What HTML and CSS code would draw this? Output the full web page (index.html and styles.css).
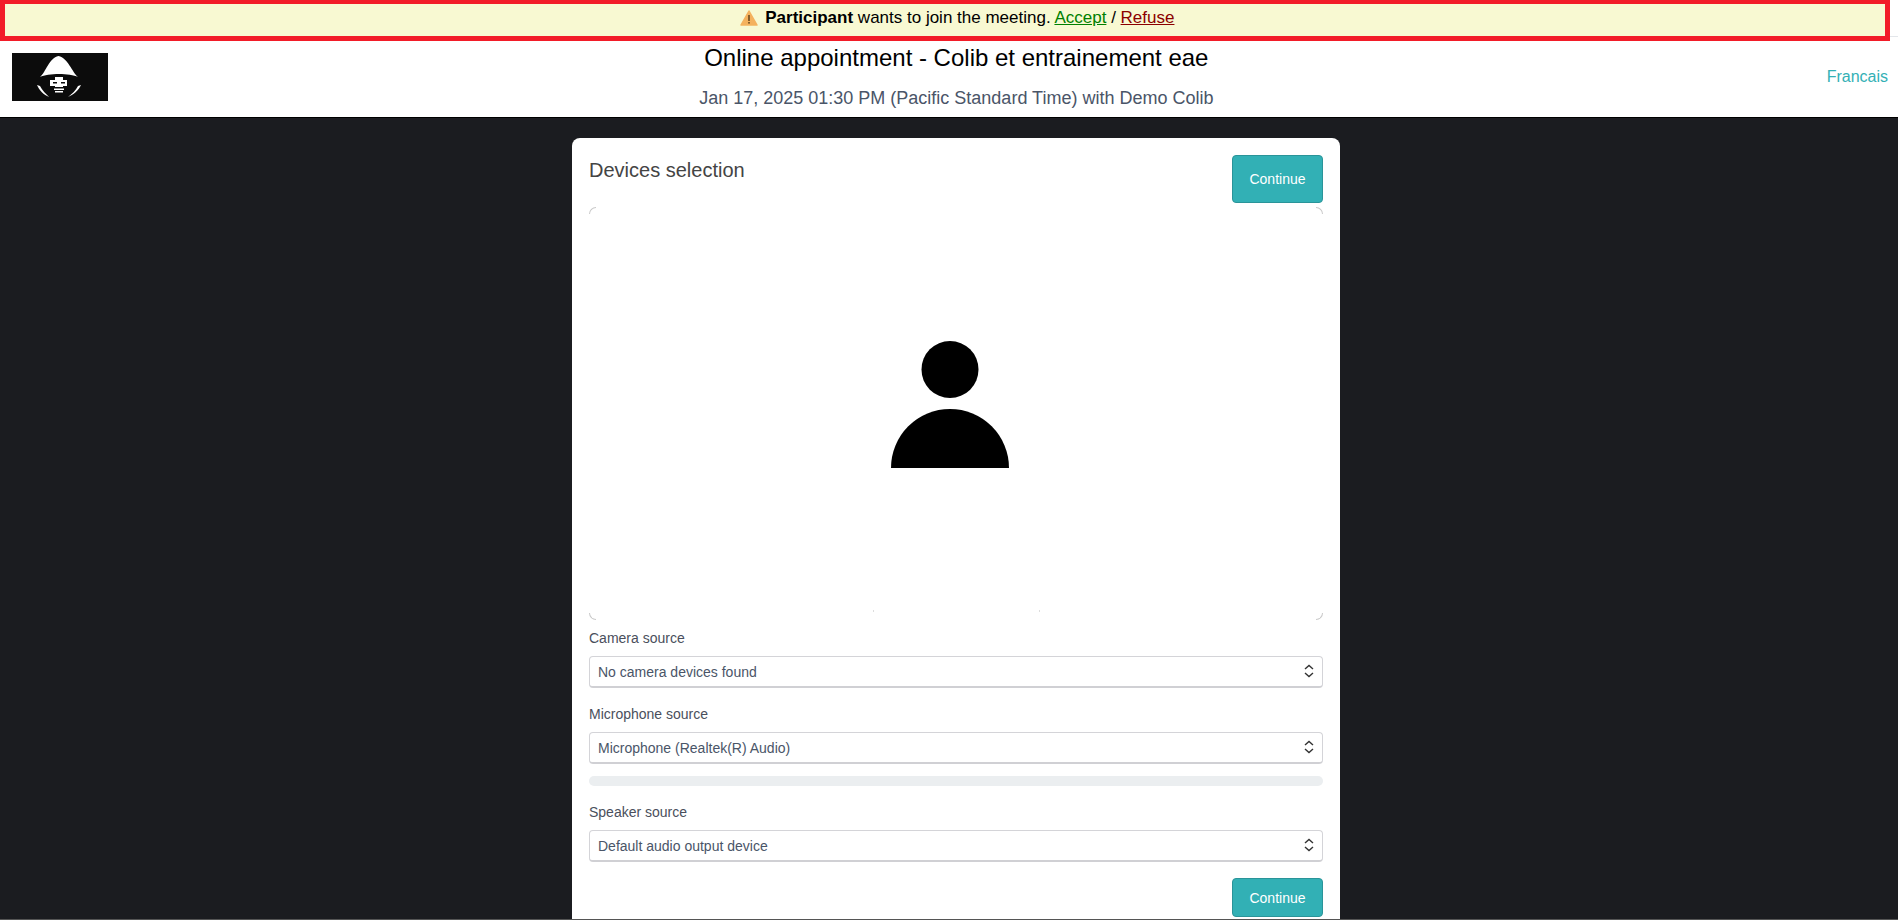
FILE: index.html
```html
<!DOCTYPE html>
<html lang="en">
<head>
    <meta charset="UTF-8">
    <meta name="viewport" content="width=device-width, initial-scale=1.0">
    <title>Online appointment</title>
    <link rel="stylesheet" href="styles.css">
</head>
<body>
    <div class="join-banner">
        <svg class="warn-icon" width="18" height="16" viewBox="0 0 18 16">
            <path d="M9 1 L17 15 L1 15 Z" fill="#f4b25e" stroke="#f4b25e" stroke-width="1.500" stroke-linejoin="round"/>
            <rect x="8.200" y="5" width="1.600" height="6" fill="#6b4a20"/>
            <rect x="8.200" y="12" width="1.600" height="1.600" fill="#6b4a20"/>
        </svg>
        <b>Participant</b> wants to join the meeting.
        <a class="accept" href="#">Accept</a> / <a class="refuse" href="#">Refuse</a>
    </div>

    <header class="top-header">
        <div class="logo">
            <svg width="96" height="48" viewBox="0 0 96 48">
                <rect width="96" height="48" fill="#0c0c0c"/>
                <path d="M28 24 C34 19 37 5 46.500 3 C56 5 60 19 66 24 C58 20 36 20 28 24 Z" fill="#fff"/>
                <path d="M43 24 H51 V27 H55 V33 H51 V34 H43 V33 H38 V27 H43 Z" fill="#fff"/>
                <rect x="41" y="29" width="4" height="1.500" fill="#0c0c0c"/>
                <rect x="49" y="29" width="4" height="1.500" fill="#0c0c0c"/>
                <rect x="42" y="35.500" width="10" height="1.500" fill="#fff"/>
                <rect x="43" y="38" width="8" height="1.500" fill="#fff"/>
                <path d="M25 32 L28 33 C30 37 34 41 37 44 C32 42 27 37 25 32 Z" fill="#fff"/>
                <path d="M69 32 L66 33 C64 37 60 41 56 44 C61 42 67 37 69 32 Z" fill="#fff"/>
            </svg>
        </div>
        <div class="header-text">
            <h1>Online appointment - Colib et entrainement eae</h1>
            <p>Jan 17, 2025 01:30 PM (Pacific Standard Time) with Demo Colib</p>
        </div>
        <a class="lang" href="#">Francais</a>
    </header>

    <main class="page">
        <div class="card">
            <div class="card-top">
                <h2>Devices selection</h2>
                <button class="btn">Continue</button>
            </div>

            <div class="video-box">
                <span class="corner tl"></span>
                <span class="corner tr"></span>
                <span class="corner bl"></span>
                <span class="corner br"></span>
                <span class="tick tick-left"></span>
                <span class="tick tick-right"></span>
                <svg width="118" height="127" viewBox="0 0 118 127">
                    <circle cx="59" cy="28.500" r="28.500"/>
                    <path d="M0 127 A59 59 0 0 1 118 127 Z"/>
                </svg>
            </div>

            <label class="field-label">Camera source</label>
            <div class="select-box">No camera devices found
                <svg class="chevrons" width="10" height="14" viewBox="0 0 10 14"><path d="M1 5 L5 1.500 L9 5 M1 9 L5 12.500 L9 9"/></svg>
            </div>

            <label class="field-label">Microphone source</label>
            <div class="select-box">Microphone (Realtek(R) Audio)
                <svg class="chevrons" width="10" height="14" viewBox="0 0 10 14"><path d="M1 5 L5 1.500 L9 5 M1 9 L5 12.500 L9 9"/></svg>
            </div>
            <div class="level-bar"></div>

            <label class="field-label">Speaker source</label>
            <div class="select-box">Default audio output device
                <svg class="chevrons" width="10" height="14" viewBox="0 0 10 14"><path d="M1 5 L5 1.500 L9 5 M1 9 L5 12.500 L9 9"/></svg>
            </div>

            <div class="card-bottom">
                <button class="btn">Continue</button>
            </div>
        </div>
    </main>
</body>
</html>
```

FILE: styles.css
```css
* {
    margin: 0;
    padding: 0;
    box-sizing: border-box;
}

html, body {
    height: 920px;
    overflow: hidden;
}

body {
    position: relative;
    background: #1b1c20;
    font-family: "Liberation Sans", Arial, sans-serif;
    color: #4a5568;
    border-bottom: 1px solid #555;
}

/* Banner sits over the top of the header */
.join-banner {
    position: absolute;
    top: 0;
    left: 0;
    width: 1890px;
    height: 41px;
    padding-left: 24px;
    background: #f8f9d2;
    border: 5px solid #f21c28;
    border-top-width: 4px;
    color: #000;
    font-size: 17px;
    line-height: 27px;
    text-align: center;
}

.warn-icon {
    vertical-align: -3px;
    margin-right: 3px;
}

.accept {
    color: #008000;
}

.refuse {
    color: #8b0000;
}

.top-header {
    display: flex;
    justify-content: space-between;
    align-items: center;
    height: 118px;
    padding: 41px 10px 0 12px;
    background: linear-gradient(#fff 36px, #e3e6ea 36px, #e3e6ea 37px, #fff 37px);
    border-bottom: 1px solid #000;
}

.logo {
    width: 96px;
    height: 48px;
    margin-top: -4px;
}

.logo svg {
    display: block;
}

.header-text {
    flex: 1;
    padding-right: 22px;
    text-align: center;
}

.header-text h1 {
    font-size: 24px;
    font-weight: normal;
    color: #000;
    line-height: 28px;
    margin-top: -5px;
}

.header-text p {
    font-size: 18px;
    line-height: 22px;
    margin-top: 15px;
}

.lang {
    color: #33b0b5;
    font-size: 16px;
    text-decoration: none;
    margin-top: -5px;
}

.page {
    display: flex;
    justify-content: center;
    padding: 20px 0 0 14px;
}

.card {
    width: 768px;
    height: 800px;
    padding: 17px 17px 0;
    background: #fff;
    border-radius: 8px;
}

.card-top {
    display: flex;
    justify-content: space-between;
    align-items: flex-start;
}

.card-top h2 {
    font-size: 20px;
    font-weight: normal;
    line-height: 24px;
    color: #444;
    margin-top: 3px;
}

.btn {
    width: 91px;
    height: 48px;
    background: #32b0b5;
    border: 1px solid #2a9499;
    border-radius: 4px;
    color: #fff;
    font-family: inherit;
    font-size: 14px;
}

.video-box {
    position: relative;
    display: flex;
    justify-content: center;
    align-items: center;
    height: 413px;
    margin-top: 4px;
    padding: 0 12px 18px 0;
}

/* Faint rounded corners left around the white video frame */
.corner {
    position: absolute;
    width: 7px;
    height: 7px;
    border: 0 solid #c9c9c9;
}

.tl {
    top: 0;
    left: 0;
    border-width: 1px 0 0 1px;
    border-top-left-radius: 7px;
}

.tr {
    top: 0;
    right: 0;
    border-width: 1px 1px 0 0;
    border-top-right-radius: 7px;
}

.bl {
    bottom: 0;
    left: 0;
    border-width: 0 0 1px 1px;
    border-bottom-left-radius: 7px;
}

.br {
    bottom: 0;
    right: 0;
    border-width: 0 1px 1px 0;
    border-bottom-right-radius: 7px;
}

.tick {
    position: absolute;
    bottom: 8px;
    width: 1px;
    height: 2px;
    background: #ddd;
}

.tick-left {
    left: 284px;
}

.tick-right {
    left: 450px;
}

.field-label {
    display: block;
    font-size: 14px;
    line-height: 16px;
    color: #4a4f5c;
    margin-top: 10px;
}

.select-box {
    position: relative;
    height: 32px;
    margin-top: 10px;
    padding-left: 8px;
    border: 1px solid #d4d4d8;
    border-bottom: 2px solid #d0d0d4;
    border-radius: 4px;
    font-size: 14px;
    line-height: 31px;
}

.select-box + .field-label {
    margin-top: 18px;
}

.chevrons {
    position: absolute;
    right: 8px;
    top: 7px;
    fill: none;
    stroke: #333;
    stroke-width: 1.400;
}

.level-bar {
    height: 10px;
    margin-top: 12px;
    background: #ebeef0;
    border-radius: 5px;
}

.level-bar + .field-label {
    margin-top: 18px;
}

.card-bottom {
    display: flex;
    justify-content: flex-end;
    margin-top: 16px;
}

.card-bottom .btn {
    height: 39px;
}
```
